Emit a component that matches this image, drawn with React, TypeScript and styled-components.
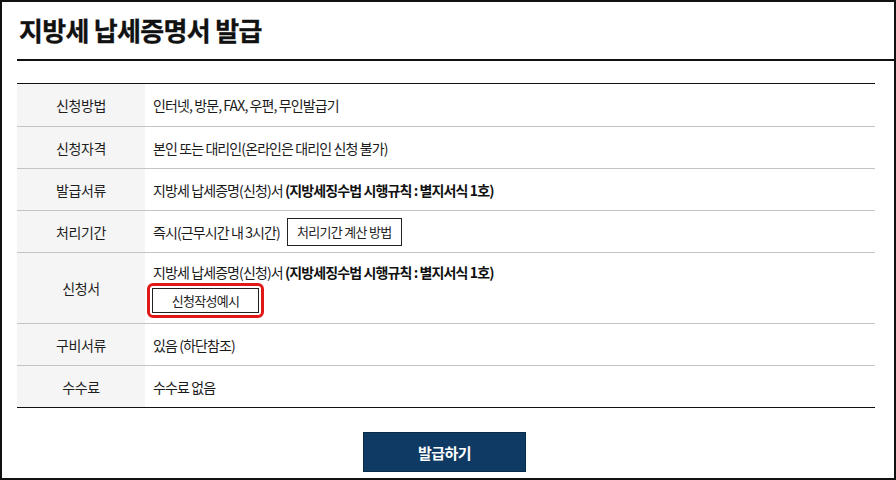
import styled, { createGlobalStyle } from 'styled-components'

const GlobalStyle = createGlobalStyle`
	html, body {
		margin: 0;
		padding: 0;
		background: #fff;
	}
	body {
		font-family: "Noto Sans CJK KR", "Noto Sans", sans-serif;
		color: #222;
	}
	* {
		box-sizing: border-box;
	}
`

const Frame = styled.div`
	width: 896px;
	height: 480px;
	border: 2px solid #111;
	padding: 0 19px 0 15px;
	overflow: hidden;
`
const Header = styled.div`
	height: 59px;
	margin-right: -19px;
	border-bottom: 2.5px solid #111;
	display: flex;
	align-items: center;
	padding: 0 0 2px 2px;
`
const Title = styled.h1`
	margin: 0;
	font-size: 26px;
	font-weight: 700;
	color: #111;
	letter-spacing: -0.7px;
	-webkit-text-stroke: 0.3px #111;
`
const InfoTable = styled.div`
	margin-top: 22px;
	border-top: 1.5px solid #111;
	border-bottom: 1.5px solid #111;
`
const TableRow = styled.div<{ $tall?: boolean }>`
	display: flex;
	height: ${(p) => (p.$tall ? '71px' : '42px')};
	border-top: 1px solid #c4c4c4;

	&:first-child {
		border-top: none;
	}
`
const Label = styled.div`
	width: 128px;
	flex-shrink: 0;
	background: #f5f5f5;
	display: flex;
	align-items: center;
	justify-content: center;
	font-size: 14px;
	color: #1e1e1e;
	letter-spacing: -0.4px;
`
const Cell = styled.div<{ $tall?: boolean }>`
	flex: 1;
	display: flex;
	flex-direction: column;
	justify-content: ${(p) => (p.$tall ? 'flex-start' : 'center')};
	align-items: flex-start;
	padding: ${(p) => (p.$tall ? '9px 0 0 8px' : '0 0 0 8px')};
	gap: 1px;
	font-size: 14px;
	color: #1a1a1a;
`
const Text = styled.span`
	letter-spacing: -0.9px;
	line-height: 20px;

	b {
		font-weight: 700;
		color: #111;
	}
`
const Line = styled.div`
	display: flex;
	align-items: center;
	gap: 7px;
`
const SmallButton = styled.button<{ $wide?: boolean }>`
	height: ${(p) => (p.$wide ? '25px' : '28px')};
	width: ${(p) => (p.$wide ? '107px' : '115px')};
	border: 1px solid #222;
	background: #fff;
	font-family: inherit;
	font-size: 13px;
	color: #222;
	letter-spacing: -0.7px;
	padding: 0;
`
const Highlight = styled.span`
	display: inline-flex;
	padding: 2px;
	margin-left: -6px;
	border: 3px solid #e01818;
	border-radius: 6px;
`
const Actions = styled.div`
	display: flex;
	justify-content: center;
	margin-top: 24px;
	padding-right: 3px;
`
const IssueButton = styled.button`
	width: 163px;
	height: 40px;
	border: 1px solid #0a2a4a;
	background: #0f3a63;
	color: #fff;
	font-family: inherit;
	font-size: 15px;
	font-weight: 700;
	letter-spacing: -0.5px;
`

type Row = {
	label: string
	tall?: boolean
	content: React.ReactNode
}

const rows: Row[] = [
	{ label: '신청방법', content: <Text>인터넷, 방문, FAX, 우편, 무인발급기</Text> },
	{ label: '신청자격', content: <Text>본인 또는 대리인(온라인은 대리인 신청 불가)</Text> },
	{
		label: '발급서류',
		content: (
			<Text>
				지방세 납세증명(신청)서 <b>(지방세징수법 시행규칙 : 별지서식 1호)</b>
			</Text>
		),
	},
	{
		label: '처리기간',
		content: (
			<Line>
				<Text>즉시(근무시간 내 3시간)</Text>
				<SmallButton>처리기간 계산 방법</SmallButton>
			</Line>
		),
	},
	{
		label: '신청서',
		tall: true,
		content: (
			<>
				<Text>
					지방세 납세증명(신청)서 <b>(지방세징수법 시행규칙 : 별지서식 1호)</b>
				</Text>
				<Highlight>
					<SmallButton $wide>신청작성예시</SmallButton>
				</Highlight>
			</>
		),
	},
	{ label: '구비서류', content: <Text>있음 (하단참조)</Text> },
	{ label: '수수료', content: <Text>수수료 없음</Text> },
]

const App: React.FC = () => {
	return (
		<>
			<GlobalStyle />
			<Frame>
				<Header>
					<Title>지방세 납세증명서 발급</Title>
				</Header>
				<InfoTable>
					{rows.map((row) => (
						<TableRow key={row.label} $tall={row.tall}>
							<Label>{row.label}</Label>
							<Cell $tall={row.tall}>{row.content}</Cell>
						</TableRow>
					))}
				</InfoTable>
				<Actions>
					<IssueButton>발급하기</IssueButton>
				</Actions>
			</Frame>
		</>
	)
}

export default App
